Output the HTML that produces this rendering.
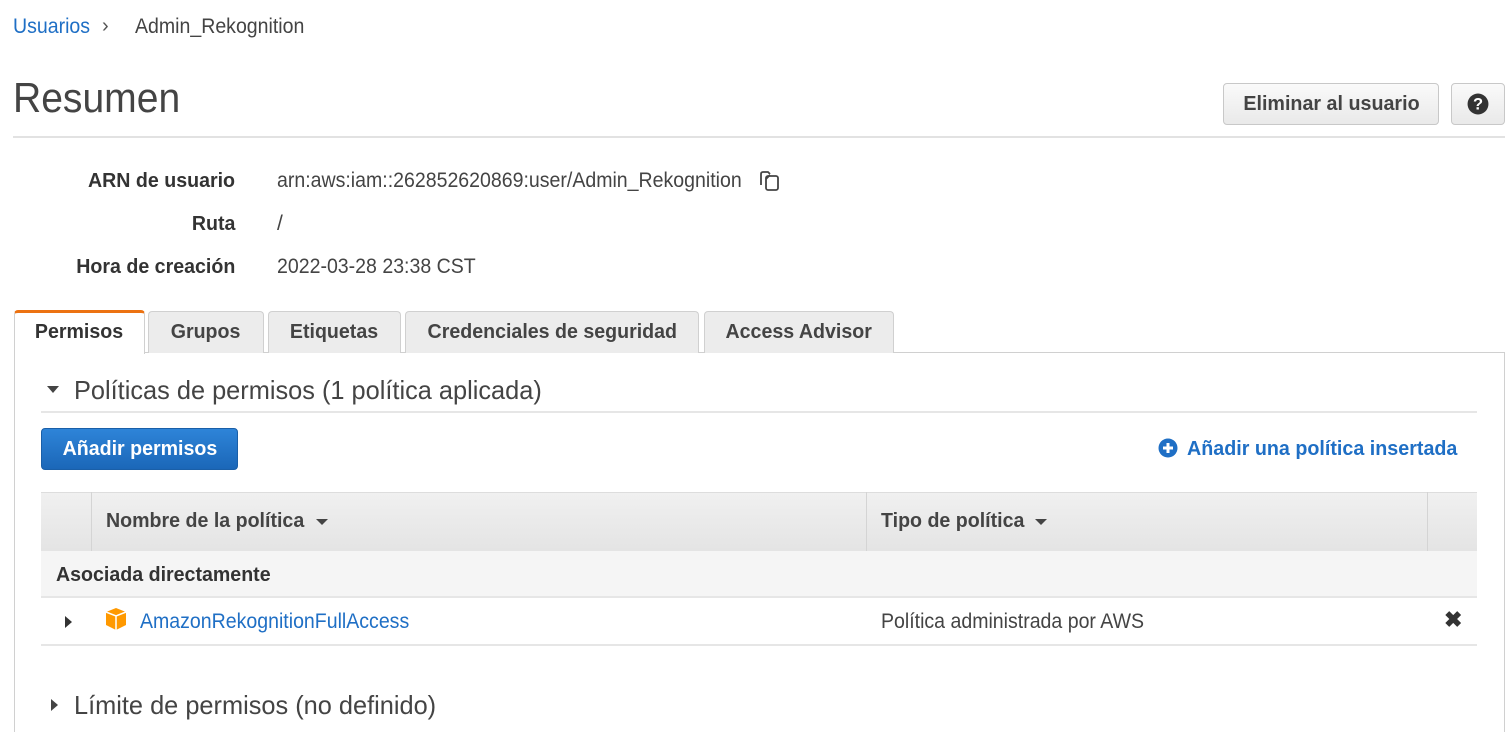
<!DOCTYPE html>
<html><head><meta charset="utf-8"><style>
*{margin:0;padding:0;box-sizing:border-box}
body{width:1509px;height:724px;background:#fff;position:relative;overflow:hidden;font-family:"Liberation Sans",sans-serif;color:#333}
.a{position:absolute;white-space:nowrap}
.t{display:inline-block;transform:scaleX(.93);transform-origin:left center}
.tr{display:inline-block;transform:scaleX(.98);transform-origin:right center}
.tc{display:inline-block;transform:scaleX(.98);transform-origin:center center}
.b .t{transform:scaleX(.98)}
.h .t{transform:scaleX(.975)}
.b{font-weight:bold}
.blue{color:#1f6fc5}
.tab{position:absolute;top:311px;height:42px;background:#ececec;border:1px solid #d0d0d0;border-bottom:none;border-radius:4px 4px 0 0;font-weight:bold;font-size:20px;line-height:40px;text-align:center;color:#444}
</style></head><body>
<div class="a" style="left:13px;top:15px;font-size:21px;line-height:24px"><span class="t"><span class="blue">Usuarios</span></span></div>
<div class="a" style="left:102px;top:14px;font-size:20px;line-height:24px;color:#555">›</div>
<div class="a" style="left:135px;top:15px;font-size:21px;line-height:24px;color:#444"><span class="t">Admin_Rekognition</span></div>
<div class="a" style="left:13px;top:73px;font-size:42px;line-height:50px;color:#444"><span class="t">Resumen</span></div>
<div class="a" style="left:1223px;top:83px;width:216px;height:42px;border:1px solid #c8c8c8;border-radius:4px;background:linear-gradient(#fafafa,#e9e9e9);font-size:20px;font-weight:bold;line-height:40px;text-align:center;color:#444"><span class="tc" style="transform:scaleX(.985)">Eliminar al usuario</span></div>
<div class="a" style="left:1451px;top:83px;width:54px;height:42px;border:1px solid #c8c8c8;border-radius:4px;background:linear-gradient(#fafafa,#e9e9e9)">
<svg width="22" height="22" viewBox="0 0 20 20" style="position:absolute;left:15px;top:9px"><circle cx="10" cy="10" r="9.5" fill="#333"/><text x="10" y="15" font-family="Liberation Sans" font-weight="bold" font-size="15" fill="#fff" text-anchor="middle">?</text></svg></div>
<div class="a" style="left:13px;top:136px;width:1492px;height:2px;background:#e2e2e2"></div>

<div class="a b" style="right:1274px;top:169px;font-size:20px;line-height:24px"><span class="tr">ARN de usuario</span></div>
<div class="a b" style="right:1274px;top:212px;font-size:20px;line-height:24px"><span class="tr">Ruta</span></div>
<div class="a b" style="right:1274px;top:255px;font-size:20px;line-height:24px"><span class="tr">Hora de creación</span></div>
<div class="a" style="left:277px;top:169px;font-size:21px;line-height:24px;color:#444"><span class="t">arn:aws:iam::262852620869:user/Admin_Rekognition</span></div>
<svg class="a" style="left:758px;top:169px" width="24" height="24" viewBox="0 0 24 24" fill="none" stroke="#444" stroke-width="1.8"><path d="M3 16V5q0-2 2-2h5l2 2"/><rect x="8" y="7" width="12" height="14" rx="2"/><path d="M8 10l4-4"/></svg>
<div class="a" style="left:277px;top:212px;font-size:21px;line-height:24px;color:#444">/</div>
<div class="a" style="left:277px;top:255px;font-size:21px;line-height:24px;color:#444"><span class="t">2022-03-28 23:38 CST</span></div>

<div class="a" style="left:14px;top:352px;width:1491px;height:380px;border:1px solid #d0d0d0;border-bottom:none"></div>
<div class="tab" style="left:148px;width:116px"><span class="tc">Grupos</span></div>
<div class="tab" style="left:268px;width:133px"><span class="tc">Etiquetas</span></div>
<div class="tab" style="left:405px;width:294px"><span class="tc" style="transform:scaleX(.98)">Credenciales de seguridad</span></div>
<div class="tab" style="left:704px;width:190px"><span class="tc">Access Advisor</span></div>
<div class="a" style="left:14px;top:310px;width:131px;height:44px;background:#fff;border:1px solid #d0d0d0;border-top:3px solid #ec7211;border-bottom:none;border-radius:4px 4px 0 0;font-weight:bold;font-size:20px;line-height:38px;text-align:center;color:#333"><span class="tc">Permisos</span></div>

<div class="a" style="left:47px;top:386px;width:0;height:0;border-left:6px solid transparent;border-right:6px solid transparent;border-top:7px solid #444"></div>
<div class="a h" style="left:74px;top:375px;font-size:26px;line-height:30px;color:#444"><span class="t">Políticas de permisos (1 política aplicada)</span></div>
<div class="a" style="left:41px;top:411px;width:1436px;height:2px;background:#e6e6e6"></div>

<div class="a" style="left:41px;top:428px;width:197px;height:42px;border:1px solid #1a5fa8;border-radius:4px;background:linear-gradient(#2e84d8,#1b67b8);color:#fff;font-weight:bold;font-size:20px;line-height:40px;text-align:center"><span class="tc">Añadir permisos</span></div>
<svg class="a" style="left:1158px;top:438px" width="20" height="20" viewBox="0 0 20 20"><circle cx="10" cy="10" r="9.5" fill="#1f6fc5"/><path d="M10 5v10M5 10h10" stroke="#fff" stroke-width="3"/></svg>
<div class="a b blue" style="left:1187px;top:437px;font-size:20px;line-height:24px"><span class="t" style="transform:scaleX(.985)">Añadir una política insertada</span></div>

<div class="a" style="left:41px;top:492px;width:1436px;height:59px;background:linear-gradient(#f0f0f0,#e4e4e4);border-top:1px solid #ddd"></div>
<div class="a" style="left:91px;top:492px;width:1px;height:59px;background:#d4d4d4"></div>
<div class="a" style="left:866px;top:492px;width:1px;height:59px;background:#d4d4d4"></div>
<div class="a" style="left:1427px;top:492px;width:1px;height:59px;background:#d4d4d4"></div>
<div class="a b" style="left:106px;top:509px;font-size:20px;line-height:24px;color:#444"><span class="t">Nombre de la política</span></div>
<div class="a" style="left:316px;top:519px;border-left:6px solid transparent;border-right:6px solid transparent;border-top:6px solid #444"></div>
<div class="a b" style="left:881px;top:509px;font-size:20px;line-height:24px;color:#444"><span class="t">Tipo de política</span></div>
<div class="a" style="left:1035px;top:519px;border-left:6px solid transparent;border-right:6px solid transparent;border-top:6px solid #444"></div>

<div class="a" style="left:41px;top:551px;width:1436px;height:47px;background:#f5f5f5;border-bottom:2px solid #e6e6e6"></div>
<div class="a b" style="left:56px;top:563px;font-size:20px;line-height:24px;color:#333"><span class="t">Asociada directamente</span></div>

<div class="a" style="left:65px;top:616px;border-top:6px solid transparent;border-bottom:6px solid transparent;border-left:7px solid #333"></div>
<svg class="a" style="left:104px;top:607px" width="24" height="24" viewBox="0 0 24 24"><path d="M2 5l10-4 10 4v13l-10 5-10-5z" fill="#f90"/><path d="M2 5l10 4 10-4M12 9v14" stroke="#fff" stroke-width="1.5" fill="none"/></svg>
<div class="a blue" style="left:140px;top:610px;font-size:21px;line-height:24px"><span class="t">AmazonRekognitionFullAccess</span></div>
<div class="a" style="left:881px;top:610px;font-size:21px;line-height:24px;color:#444"><span class="t">Política administrada por AWS</span></div>
<div class="a" style="left:1444px;top:608px;font-size:22px;line-height:24px;font-weight:bold;color:#333">✖</div>
<div class="a" style="left:41px;top:644px;width:1436px;height:2px;background:#e6e6e6"></div>

<div class="a" style="left:51px;top:699px;border-top:6px solid transparent;border-bottom:6px solid transparent;border-left:7px solid #444"></div>
<div class="a h" style="left:74px;top:690px;font-size:26px;line-height:30px;color:#444"><span class="t" style="transform:scaleX(.975)">Límite de permisos (no definido)</span></div>
</body></html>
